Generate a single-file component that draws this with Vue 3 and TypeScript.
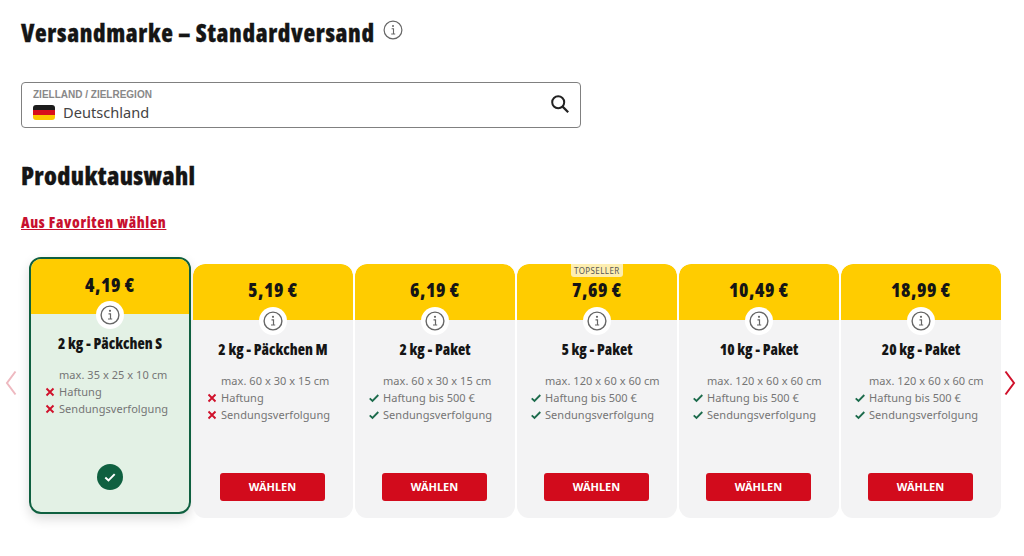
<script setup lang="ts">
interface Product {
  price: string
  title: string
  size: string
  liability: string
  covered: boolean
  topseller?: boolean
  selected?: boolean
}

const products: Product[] = [
  { price: '4,19 €', title: '2 kg - Päckchen S', size: 'max. 35 x 25 x 10 cm', liability: 'Haftung', covered: false, selected: true },
  { price: '5,19 €', title: '2 kg - Päckchen M', size: 'max. 60 x 30 x 15 cm', liability: 'Haftung', covered: false },
  { price: '6,19 €', title: '2 kg - Paket', size: 'max. 60 x 30 x 15 cm', liability: 'Haftung bis 500 €', covered: true },
  { price: '7,69 €', title: '5 kg - Paket', size: 'max. 120 x 60 x 60 cm', liability: 'Haftung bis 500 €', covered: true, topseller: true },
  { price: '10,49 €', title: '10 kg - Paket', size: 'max. 120 x 60 x 60 cm', liability: 'Haftung bis 500 €', covered: true },
  { price: '18,99 €', title: '20 kg - Paket', size: 'max. 120 x 60 x 60 cm', liability: 'Haftung bis 500 €', covered: true },
]
</script>

<template>
  <main class="page">
    <header class="title-row">
      <h1>Versandmarke – Standardversand</h1>
      <svg class="title-info" viewBox="0 0 20 20" width="20" height="20">
        <circle cx="10" cy="10" r="8.9" fill="none" stroke="#666" stroke-width="1.2" />
        <path d="M8.6 8.8h1.9v5M8.2 14h4" fill="none" stroke="#666" stroke-width="1.1" />
        <circle cx="10" cy="5.9" r="1" fill="#666" />
      </svg>
    </header>

    <div class="search">
      <div class="search-text">
        <span class="search-label">ZIELLAND / ZIELREGION</span>
        <div class="search-value">
          <span class="flag"></span>
          <span>Deutschland</span>
        </div>
      </div>
      <svg class="search-icon" viewBox="0 0 20 20" width="20" height="20">
        <circle cx="8.2" cy="8.2" r="6" fill="none" stroke="#222" stroke-width="2" />
        <path d="M12.6 12.6l5.6 5.6" stroke="#222" stroke-width="2.2" />
      </svg>
    </div>

    <h2>Produktauswahl</h2>
    <a class="favorites" href="#">Aus Favoriten wählen</a>

    <section class="carousel">
      <svg class="arrow" viewBox="0 0 12 26" width="12" height="26">
        <path d="M10.5 1.5L2 13l8.500 11.500" fill="none" stroke="#eeb9c0" stroke-width="2" />
      </svg>

      <div class="cards">
        <article
          v-for="product in products"
          :key="product.title"
          class="card"
          :class="{ selected: product.selected }"
        >
          <div class="card-head">
            <span v-if="product.topseller" class="badge">TOPSELLER</span>
            <span class="price">{{ product.price }}</span>
            <span class="info">
              <svg viewBox="0 0 20 20" width="20" height="20">
                <circle cx="10" cy="10" r="8.9" fill="none" stroke="#666" stroke-width="1.4" />
                <path d="M8.500 8.800h2v5M8 14h4.200" fill="none" stroke="#666" stroke-width="1.2" />
                <circle cx="10" cy="5.800" r="1.100" fill="#666" />
              </svg>
            </span>
          </div>

          <div class="card-body">
            <h3>{{ product.title }}</h3>
            <ul class="facts">
              <li>{{ product.size }}</li>
              <li>
                <svg v-if="product.covered" class="mark" viewBox="0 0 10 10" width="10" height="10">
                  <path d="M.7 5.300l2.800 2.700L9.300 2" fill="none" stroke="#1c6b4c" stroke-width="1.800" />
                </svg>
                <svg v-else class="mark" viewBox="0 0 10 10" width="10" height="10">
                  <path d="M1.500 1.500l7 7M8.500 1.500l-7 7" fill="none" stroke="#d0112b" stroke-width="1.900" />
                </svg>
                {{ product.liability }}
              </li>
              <li>
                <svg v-if="product.covered" class="mark" viewBox="0 0 10 10" width="10" height="10">
                  <path d="M.7 5.300l2.800 2.700L9.300 2" fill="none" stroke="#1c6b4c" stroke-width="1.800" />
                </svg>
                <svg v-else class="mark" viewBox="0 0 10 10" width="10" height="10">
                  <path d="M1.500 1.500l7 7M8.500 1.500l-7 7" fill="none" stroke="#d0112b" stroke-width="1.900" />
                </svg>
                Sendungsverfolgung
              </li>
            </ul>

            <span v-if="product.selected" class="chosen">
              <svg viewBox="0 0 26 26" width="26" height="26">
                <circle cx="13" cy="13" r="13" fill="#0f6040" />
                <path d="M8.300 13.400l3.200 3 6.200-6.300" fill="none" stroke="#fff" stroke-width="2" />
              </svg>
            </span>
            <button v-else class="choose" type="button">WÄHLEN</button>
          </div>
        </article>
      </div>

      <svg class="arrow" viewBox="0 0 12 26" width="12" height="26">
        <path d="M1.500 1.500L10 13 1.500 24.500" fill="none" stroke="#d0112b" stroke-width="2" />
      </svg>
    </section>
  </main>
</template>

<style scoped>
.page {
  width: 1024px;
  height: 556px;
  overflow: hidden;
  background: #fff;
  font-family: "Open Sans", sans-serif;
  font-stretch: 75%;
  color: #151515;
}

.title-row {
  display: flex;
  align-items: flex-start;
  gap: 8px;
  padding: 20px 0 0 21px;
  height: 82px;
  box-sizing: border-box;
}

h1 {
  margin: 0;
  font-size: 24px;
  line-height: 26px;
  font-weight: 800;
  letter-spacing: 0.66px;
  -webkit-text-stroke: 0.3px #151515;
}

.search {
  display: flex;
  align-items: center;
  justify-content: space-between;
  width: 560px;
  height: 46px;
  box-sizing: border-box;
  margin-left: 21px;
  padding: 0 10px 0 11px;
  border: 1px solid #808080;
  border-radius: 4px;
}

.search-icon {
  margin-top: -2px;
}

.search-label {
  display: block;
  font-family: "Liberation Sans", sans-serif;
  font-size: 10px;
  line-height: 11px;
  color: #888;
  font-weight: 700;
}

.search-value {
  display: flex;
  align-items: center;
  gap: 8px;
  margin-top: 3px;
  font-family: "Noto Sans", sans-serif;
  font-stretch: normal;
  font-size: 14.6px;
  line-height: 18px;
  color: #444;
}

.flag {
  width: 22px;
  height: 15px;
  border-radius: 3px;
  background: linear-gradient(#1c1c1c 0 33%, #d8101c 33% 66%, #fcc800 66%);
}

h2 {
  margin: 33px 0 0 21px;
  font-size: 25px;
  line-height: 28px;
  font-weight: 800;
  letter-spacing: 0.36px;
  -webkit-text-stroke: 0.3px #151515;
}

.favorites {
  display: block;
  width: fit-content;
  margin: 24px 0 0 21px;
  font-size: 15px;
  line-height: 18px;
  font-weight: 800;
  letter-spacing: 0.65px;
  color: #c8102e;
}

.carousel {
  display: flex;
  align-items: center;
  gap: 0;
  margin-top: 26px;
  padding-left: 5px;
}

.arrow {
  margin-bottom: 9px;
}

.cards {
  display: flex;
  align-items: flex-end;
  gap: 2px;
  width: 972px;
  margin: 0 3px 0 12px;
}

.card {
  display: flex;
  flex-direction: column;
  width: 160px;
  height: 254px;
  border-radius: 12px;
  overflow: hidden;
  background: #f3f3f4;
}

.card.selected {
  width: 162px;
  height: 257px;
  margin-bottom: 4px;
  box-sizing: border-box;
  border: 2px solid #0f6040;
  background: #e3f1e5;
  box-shadow: 0 5px 12px rgba(0, 0, 0, 0.14);
  overflow: visible;
}

.card-head {
  position: relative;
  flex: none;
  height: 56px;
  padding-top: 16px;
  box-sizing: border-box;
  text-align: center;
  background: #ffcc00;
  border-radius: 12px 12px 0 0;
}

.selected .card-head {
  height: 55px;
  padding-top: 16px;
  border-radius: 10px 10px 0 0;
}

.price {
  font-size: 19px;
  line-height: 20px;
  font-weight: 800;
  letter-spacing: 0.6px;
}

.badge {
  position: absolute;
  top: 0;
  left: 54px;
  padding: 1px 3px;
  border-radius: 0 0 3px 3px;
  background: #fdeeb0;
  font-family: "Noto Sans", sans-serif;
  font-stretch: normal;
  font-size: 8px;
  line-height: 11px;
  letter-spacing: 0.4px;
  color: #555;
}

.info {
  position: absolute;
  left: 50%;
  bottom: -15px;
  display: flex;
  align-items: center;
  justify-content: center;
  width: 28px;
  height: 28px;
  margin-left: -14px;
  border-radius: 50%;
  background: #fff;
}

.card-body {
  flex: 1;
  display: flex;
  flex-direction: column;
  align-items: center;
  padding-top: 20px;
  position: relative;
}

h3 {
  margin: 0;
  font-size: 15px;
  line-height: 18px;
  font-weight: 800;
  white-space: nowrap;
}

.facts {
  align-self: flex-start;
  margin: 14px 0 0;
  padding: 0 0 0 28px;
  list-style: none;
  font-family: "Noto Sans", sans-serif;
  font-stretch: normal;
  font-size: 11px;
  line-height: 17px;
  letter-spacing: 0.05px;
  color: #757575;
  white-space: nowrap;
}

.facts li {
  position: relative;
}

.mark {
  position: absolute;
  left: -14px;
  top: 4px;
}

.choose {
  position: absolute;
  left: 27px;
  bottom: 17px;
  width: 105px;
  height: 28px;
  padding: 0 0 2px;
  border: 0;
  border-radius: 3px;
  background: #d20b1c;
  color: #fff;
  font-family: "Noto Sans", sans-serif;
  font-stretch: normal;
  font-size: 11px;
  font-weight: 700;
}

.chosen {
  position: absolute;
  left: 66px;
  bottom: 22px;
  display: flex;
}
</style>
